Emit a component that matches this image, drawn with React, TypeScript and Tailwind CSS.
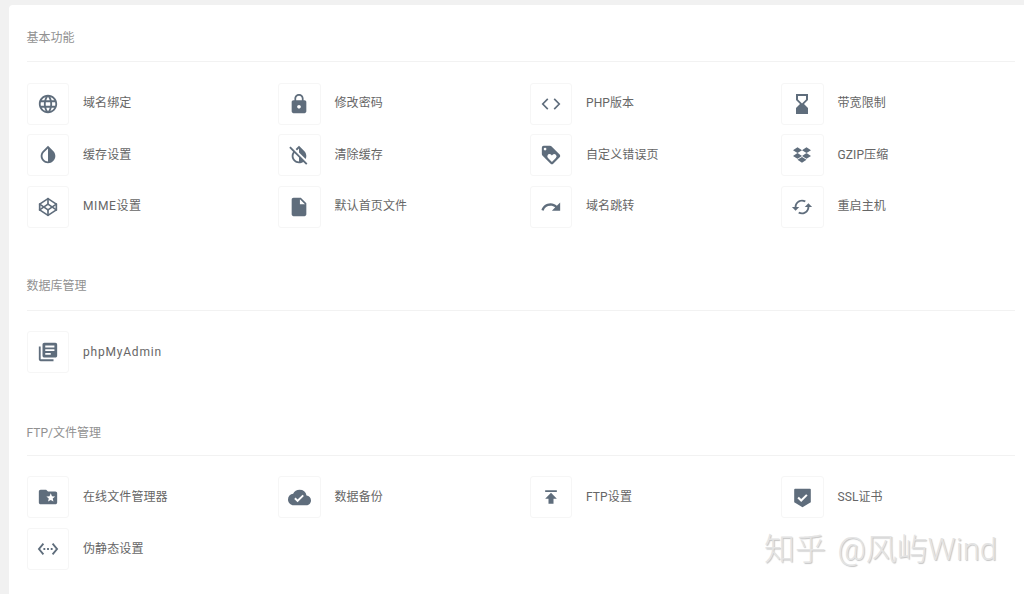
import type { ReactNode } from 'react';
import { FaDropbox } from 'react-icons/fa';
import { FiCodepen } from 'react-icons/fi';
import {
    MdCached,
    MdCloudDone,
    MdFolderSpecial,
    MdHourglassBottom,
    MdInsertDriveFile,
    MdInvertColors,
    MdInvertColorsOff,
    MdLanguage,
    MdLibraryBooks,
    MdLock,
    MdPublish,
    MdRedo,
    MdSettingsEthernet,
} from 'react-icons/md';

const iconClass = 'w-[22px] h-[22px]';

function TagHeart() {
    return (
        <svg viewBox="0 0 24 24" className={iconClass} fill="currentColor">
            <path d="M21.41 11.58L12.41 2.58A2 2 0 0 0 11 2H4A2 2 0 0 0 2 4V11A2 2 0 0 0 2.59 12.42L11.59 21.42A2 2 0 0 0 13 22A2 2 0 0 0 14.41 21.41L21.41 14.41A2 2 0 0 0 22 13A2 2 0 0 0 21.41 11.58M5.5 7A1.5 1.5 0 1 1 7 5.5A1.5 1.5 0 0 1 5.5 7M17.27 15.27L13 19.54L8.73 15.27A2.5 2.5 0 0 1 10.5 11A2.52 2.52 0 0 1 12.27 11.73L13 12.46L13.73 11.73A2.5 2.5 0 1 1 17.27 15.27Z" />
        </svg>
    );
}

function ShieldCheck() {
    return (
        <svg viewBox="0 0 24 24" className="w-[21px] h-[21px]" fill="currentColor">
            <path d="M3.5 2h17a1 1 0 0 1 1 1v14.5L12 23l-9.5-5.5V3a1 1 0 0 1 1-1z" />
            <path d="M7 12l3.5 3.5L17 9" fill="none" stroke="#fff" strokeWidth="2.4" />
        </svg>
    );
}

function CodeBrackets() {
    return (
        <svg viewBox="0 0 24 24" className="w-[22px] h-[22px]" fill="none" stroke="currentColor" strokeWidth="1.8">
            <path d="M8.5 6.5L3 12l5.5 5.5" />
            <path d="M15.5 6.5L21 12l-5.5 5.5" />
        </svg>
    );
}

type Item = { label: string; icon: ReactNode; labelClass?: string };

const basic: Item[] = [
    { label: '域名绑定', icon: <MdLanguage className={iconClass} /> },
    { label: '修改密码', icon: <MdLock className={iconClass} /> },
    { label: 'PHP版本', icon: <CodeBrackets /> },
    { label: '带宽限制', icon: <MdHourglassBottom className="w-[24px] h-[24px]" /> },
    { label: '缓存设置', icon: <MdInvertColors className={iconClass} /> },
    { label: '清除缓存', icon: <MdInvertColorsOff className={iconClass} /> },
    { label: '自定义错误页', icon: <TagHeart /> },
    { label: 'GZIP压缩', icon: <FaDropbox className="w-[18px] h-[18px]" /> },
    { label: 'MIME设置', icon: <FiCodepen className="w-[20px] h-[20px]" />, labelClass: 'tracking-[0.6px]' },
    { label: '默认首页文件', icon: <MdInsertDriveFile className={iconClass} /> },
    { label: '域名跳转', icon: <MdRedo className={iconClass} /> },
    { label: '重启主机', icon: <MdCached className={iconClass} /> },
];

const database: Item[] = [
    { label: 'phpMyAdmin', icon: <MdLibraryBooks className={iconClass} />, labelClass: 'tracking-[0.8px]' },
];

const files: Item[] = [
    { label: '在线文件管理器', icon: <MdFolderSpecial className={iconClass} /> },
    { label: '数据备份', icon: <MdCloudDone className="w-[23px] h-[23px]" /> },
    { label: 'FTP设置', icon: <MdPublish className="w-[20px] h-[20px]" /> },
    { label: 'SSL证书', icon: <ShieldCheck /> },
    { label: '伪静态设置', icon: <MdSettingsEthernet className={iconClass} /> },
];

function Section({ title, items, className, headClass, textClass }: { title: string; items: Item[]; className: string; headClass: string; textClass: string }) {
    return (
        <section className={className}>
            <h2 className={`text-xs leading-6 text-[#919191] font-normal border-b border-[#f2f2f2] ${headClass}`}>{title}</h2>
            <div className="grid grid-cols-[repeat(4,251.5px)] gap-y-[9.5px] mt-[20.5px]">
                {items.map((item) => (
                    <div key={item.label} className="flex items-center">
                        <div className="w-[42.5px] h-[42px] flex items-center justify-center bg-white border border-[#f6f6f6] rounded-[3px] text-[#5f6d7c]">
                            {item.icon}
                        </div>
                        <span className={`ml-[14px] text-xs text-[#666666] ${textClass} ${item.labelClass ?? 'tracking-[0.1px]'}`}>{item.label}</span>
                    </div>
                ))}
            </div>
        </section>
    );
}

export default function App() {
    return (
        <div className="relative h-[594px] overflow-hidden bg-[#f1f1f1] pt-[5px] pl-[9px] font-['Roboto','Noto_Sans_CJK_SC',sans-serif]">
            <div className="h-full bg-white rounded-tl pl-[17.5px] pr-[9px]">
                <Section title="基本功能" items={basic} className="pt-[21px]" headClass="pb-[11px]" textClass="-mt-[1px]" />
                <Section title="数据库管理" items={database} className="pt-[46px]" headClass="pb-[12px]" textClass="-mt-[1px]" />
                <Section title="FTP/文件管理" items={files} className="pt-[47.5px]" headClass="pb-[10px]" textClass="" />
            </div>
            <div className="absolute left-[764px] top-[530px] text-[31px] leading-10 whitespace-nowrap text-[#e4e4e4] font-light [word-spacing:4px] [text-shadow:1px_1px_1px_#c4c4c4]">
                知乎 @风屿Wind
            </div>
        </div>
    );
}
